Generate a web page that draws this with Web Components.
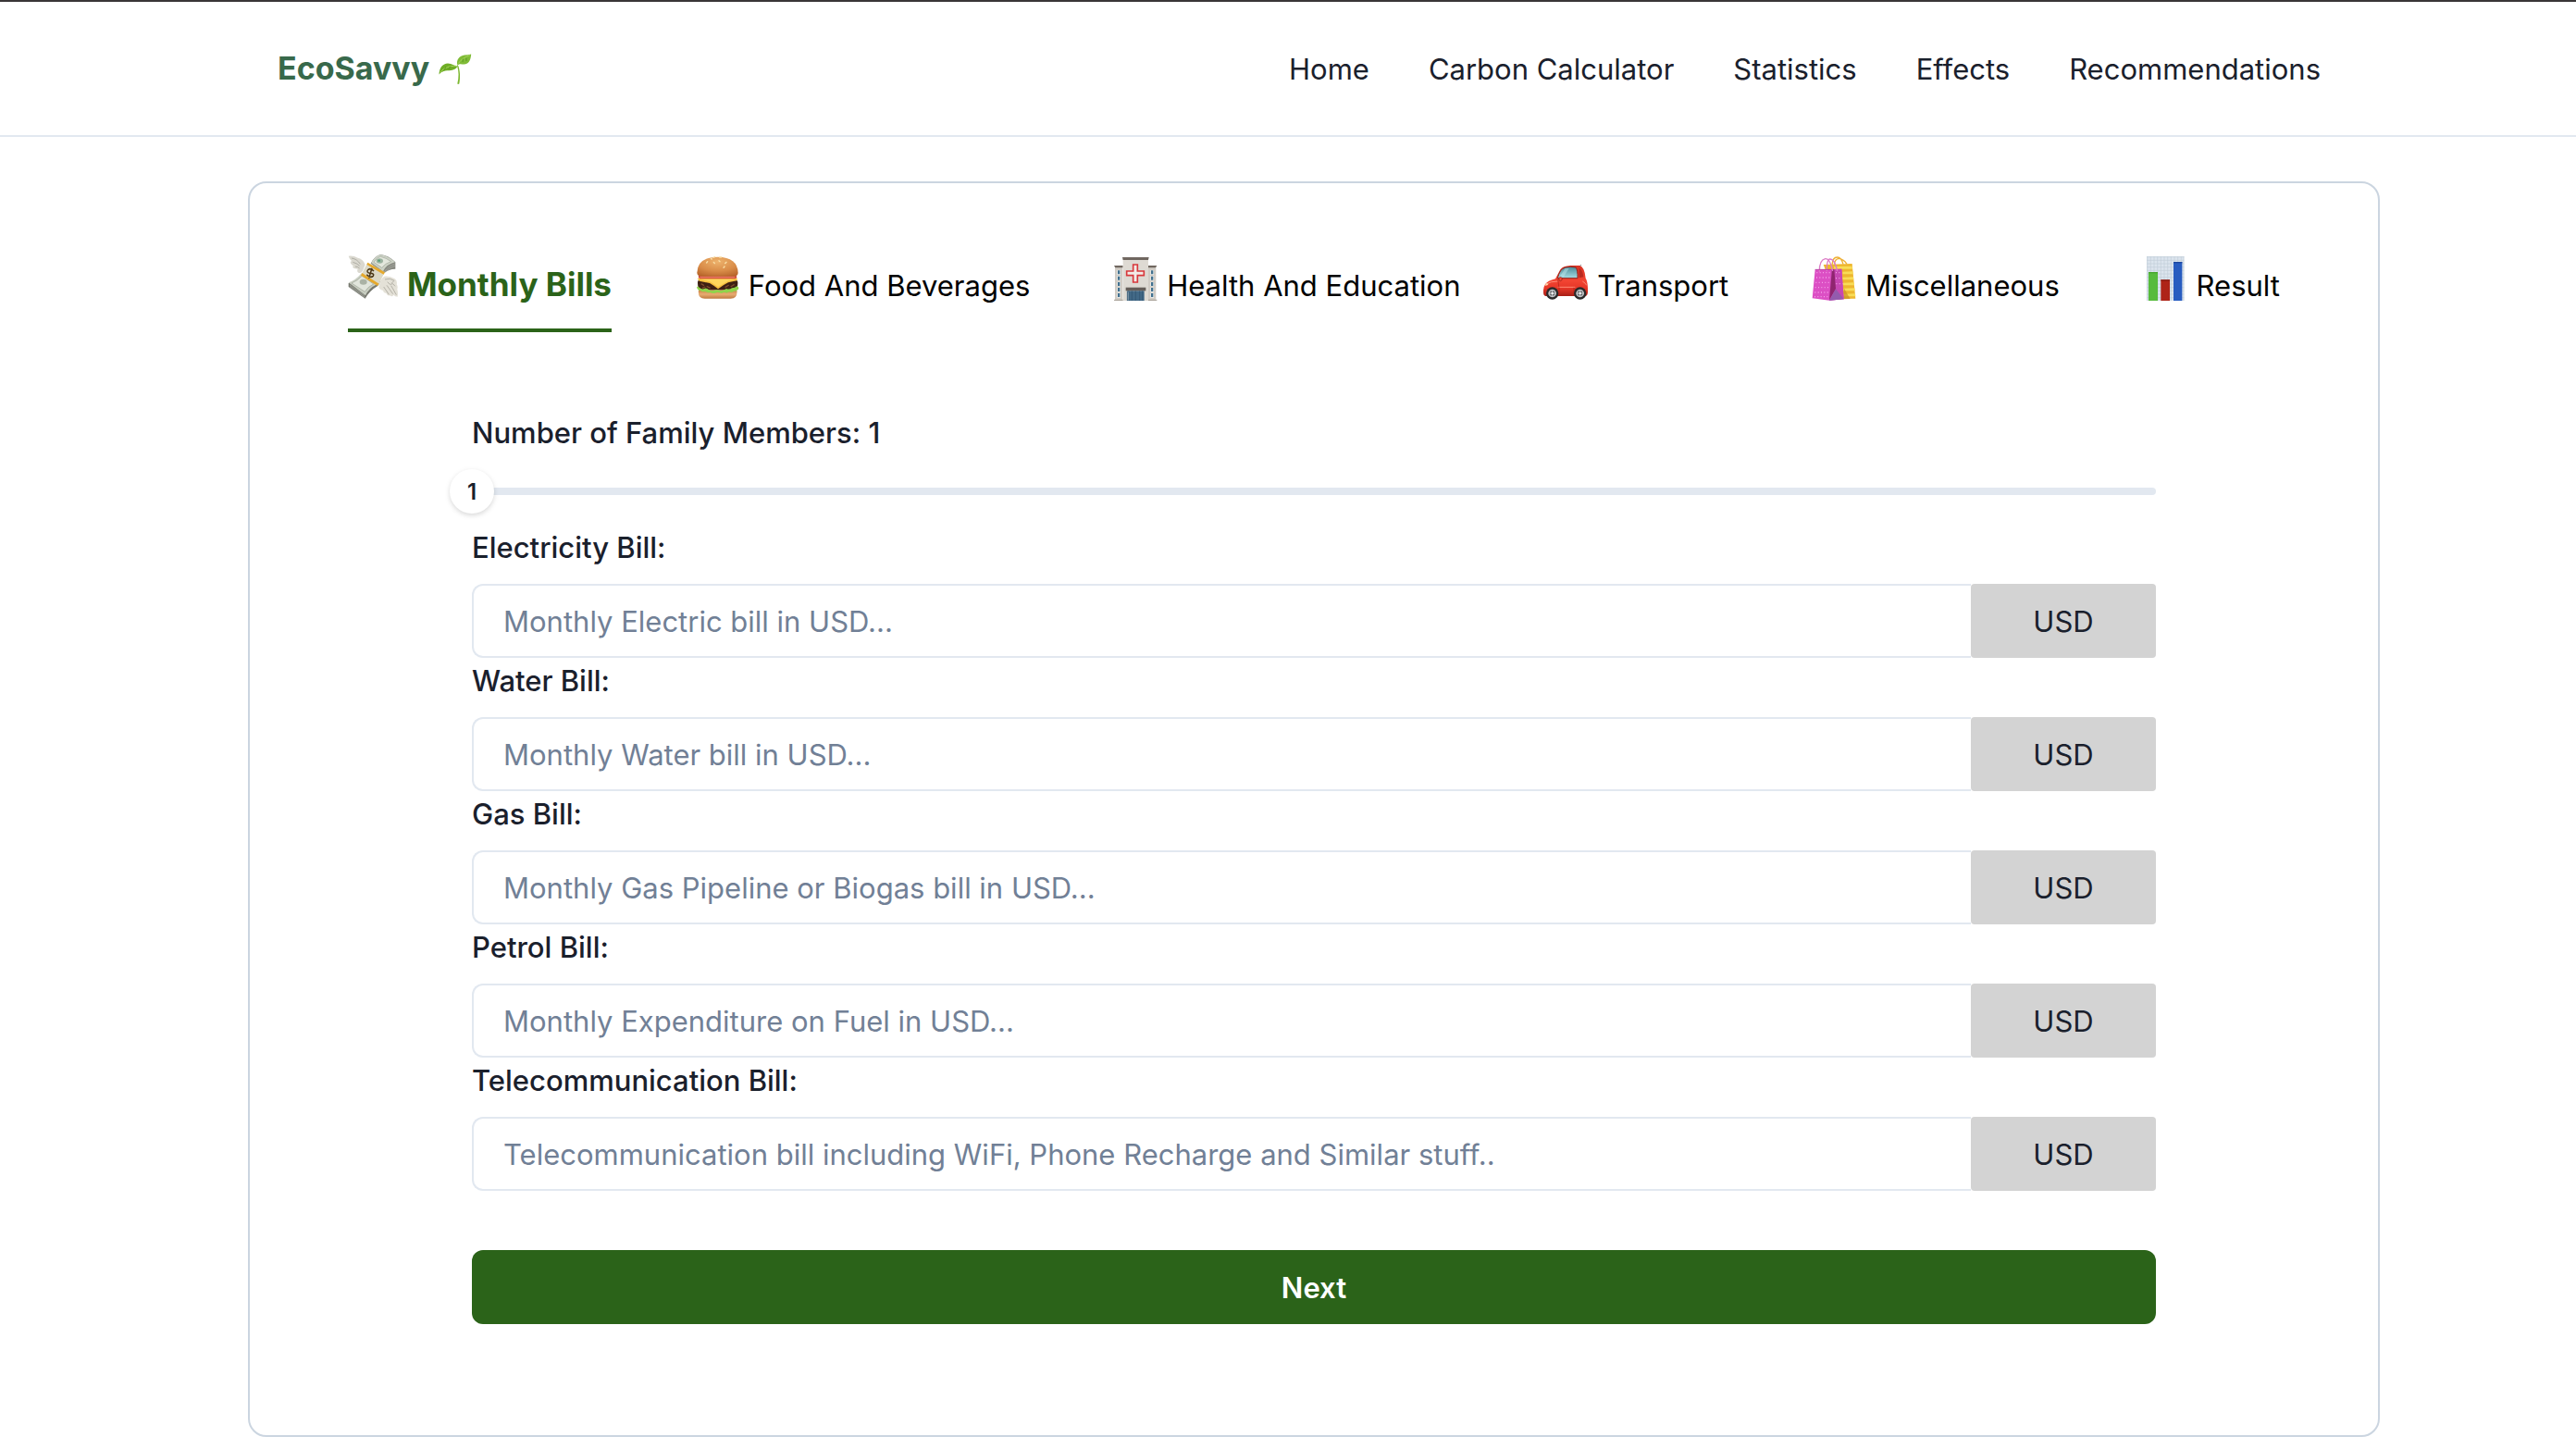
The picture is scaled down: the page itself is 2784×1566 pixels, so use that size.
<!DOCTYPE html>
<html lang="en">
<head>
<meta charset="utf-8">
<title>EcoSavvy – Carbon Calculator</title>
<style>
  html { background: #fff; }
  body {
    margin: 0;
    font-family: Inter, "Noto Sans", sans-serif;
    font-size: 31px;
    line-height: 48px;
    color: #1a202c;
    --line: #e2e8f0;
    --card-line: #cbd5e0;
    --green: #2b6319;
    --muted: #718096;
    --gutter-left: 268px;
    --gutter-right: 212px;
  }
</style>
</head>
<body>
<eco-header>
  <eco-nav-link href="#home">Home</eco-nav-link>
  <eco-nav-link href="#calculator">Carbon Calculator</eco-nav-link>
  <eco-nav-link href="#statistics">Statistics</eco-nav-link>
  <eco-nav-link href="#effects">Effects</eco-nav-link>
  <eco-nav-link href="#recommendations">Recommendations</eco-nav-link>
</eco-header>

<eco-card>
  <eco-tab slot="tabs" icon="money" active>Monthly Bills</eco-tab>
  <eco-tab slot="tabs" icon="burger">Food And Beverages</eco-tab>
  <eco-tab slot="tabs" icon="hospital">Health And Education</eco-tab>
  <eco-tab slot="tabs" icon="car">Transport</eco-tab>
  <eco-tab slot="tabs" icon="bags">Miscellaneous</eco-tab>
  <eco-tab slot="tabs" icon="chart">Result</eco-tab>

  <eco-slider label="Number of Family Members" value="1" min="1" max="20"></eco-slider>
  <eco-field label="Electricity Bill:" placeholder="Monthly Electric bill in USD..." unit="USD"></eco-field>
  <eco-field label="Water Bill:" placeholder="Monthly Water bill in USD..." unit="USD"></eco-field>
  <eco-field label="Gas Bill:" placeholder="Monthly Gas Pipeline or Biogas bill in USD..." unit="USD"></eco-field>
  <eco-field label="Petrol Bill:" placeholder="Monthly Expenditure on Fuel in USD..." unit="USD"></eco-field>
  <eco-field label="Telecommunication Bill:" placeholder="Telecommunication bill including WiFi, Phone Recharge and Similar stuff.." unit="USD"></eco-field>
  <eco-button>Next</eco-button>
</eco-card>

<script>
const icons = {
  seedling: `<svg viewBox="0 0 36 36" width="36" height="36" aria-hidden="true">
    <path d="M20 15C22 21 22 28 20.300 34.500Q21 35.300 22.300 34.600C23.600 28 23.400 20 20.800 14Z" fill="#7cb82f"/>
    <path d="M20.500 15.500C17.500 21.500 10 19.500 5.500 21Q2.500 21.800.5 24.500C.8 17.500 4.500 12.600 10 12.600C14.500 12.600 18 16 20.500 15.500Z" fill="#6fae26"/>
    <path d="M20.500 14.500C18.500 9 22.500 4 28 3.400Q32 3.200 35.200 2.400C35 6 34 10.500 31 12.500C27 15 23.500 11.500 20.500 14.500Z" fill="#7fbb36"/>
    <path d="M2 22C6 17 12 15 19 15.300M21.500 12.500C24.500 7.500 29 6 34 3.500" fill="none" stroke="#a6d65a" stroke-width="1"/>
    <path d="M6 20L8 16M11 18.500L13 15.500M26 11L26.500 7.500M30 10L30 6.500" stroke="#4f8d1a" stroke-width=".7"/>
  </svg>`,
  money: `<svg viewBox="48 33 162 162" width="54" height="54" aria-hidden="true">
    <path d="M104 78Q96 58 80 56Q66 48 50 50Q54 62 60 66Q54 68 57 74Q62 80 66 82Q60 86 68 90Q76 92 80 92Q76 100 82 104Q90 108 96 98Z" fill="#dad8cf"/>
    <path d="M60 57Q78 60 88 76M64 70Q78 74 86 82M72 84Q80 84 86 90" fill="none" stroke="#a5a39b" stroke-width="2.500"/>
    <path d="M50 138V150L104 188Q118 162 146 146L154 130Z" fill="#777970"/>
    <path d="M50 136Q72 130 92 106L142 142Q116 154 105 178Z" fill="#c9cfc2"/>
    <path d="M60 138Q80 130 94 114L131 141Q112 150 103 166Z" fill="#e1e5dc" stroke="#8c9287" stroke-width="1.500"/>
    <ellipse cx="98" cy="134" rx="12" ry="9" fill="#aab2a5"/>
    <path d="M54 144L102 178M54 149L103 184" stroke="#bfc2ba" stroke-width="1.500"/>
    <path d="M122 74Q134 50 154 45Q180 48 202 70V92Q180 92 164 106Z" fill="#85877f"/>
    <path d="M124 72Q136 50 154 46Q180 50 201 70Q174 76 162 100Z" fill="#ccd2c5"/>
    <path d="M132 70Q142 54 154 52Q172 56 188 68Q168 74 158 88Z" fill="#e3e7dd" stroke="#8e9489" stroke-width="1.500"/>
    <ellipse cx="151" cy="66" rx="11" ry="8" fill="#9bb3a0"/><circle cx="149" cy="65" r="3.500" fill="#4d9a75"/>
    <path d="M200 76Q178 82 166 102M201 82Q182 86 168 104" fill="none" stroke="#c0c2ba" stroke-width="1.500"/>
    <path d="M112 71L167 103L146 146L91 111Z" fill="#dcd9c6"/>
    <path d="M112 71L168 103L164 110L109 78ZM94 105L149 140L144 147L90 113Z" fill="#e6a92c"/>
    <path d="M132 99Q122 88 114 94Q106 102 119 106Q135 106 130 115Q120 123 109 110M126 89L116 122" fill="none" stroke="#4b3716" stroke-width="4.500"/>
    <path d="M148 152Q152 124 166 116Q184 114 200 124Q209 130 206 142Q211 148 208 158Q211 168 209 182Q200 182 196 176Q192 184 184 178Q176 180 172 170Q164 172 162 162Q154 162 148 152Z" fill="#e4e1d7"/>
    <path d="M168 126Q186 120 198 130L190 138M176 134L184 142L194 140L201 148M164 150L181 175M174 145L194 173M188 146L205 176" fill="none" stroke="#aaa79d" stroke-width="2.500"/>
  </svg>`,
  burger: `<svg viewBox="42 51 144 144" width="48" height="48" aria-hidden="true">
    <defs>
      <radialGradient id="bun" cx=".5" cy=".25" r=".8"><stop offset="0" stop-color="#edb26c"/><stop offset=".6" stop-color="#d98c48"/><stop offset="1" stop-color="#b9672c"/></radialGradient>
      <linearGradient id="heel" x1="0" y1="0" x2="0" y2="1"><stop offset="0" stop-color="#c98145"/><stop offset=".5" stop-color="#e8ad73"/><stop offset="1" stop-color="#c07a3f"/></linearGradient>
    </defs>
    <path d="M54 160H178Q182 188 158 188H74Q50 188 54 160Z" fill="url(#heel)"/>
    <path d="M51 134Q51 128 60 126H172Q181 128 181 136Q182 156 168 160H64Q50 158 51 134Z" fill="#3d2013"/>
    <path d="M62 140L72 146M80 148L92 154M140 152L152 144M158 150L170 142M66 154L76 150" stroke="#7d4a2c" stroke-width="4"/>
    <path d="M48 150Q54 148 58 154Q66 160 74 155Q82 154 88 160Q98 166 108 160Q118 158 126 163Q136 162 144 156Q154 160 162 154Q172 154 178 148Q186 150 183 158Q178 158 176 164Q168 162 162 168Q152 164 146 170Q136 166 128 171Q116 166 108 170Q98 172 92 168Q82 170 76 165Q66 168 60 162Q50 162 48 150Z" fill="#8fd44b"/>
    <path d="M50 122H180L178 130L150 136Q134 144 117 157Q104 146 90 138L56 131Z" fill="#f5bf3e"/>
    <path d="M53 124H178L150 131L117 150L90 133Z" fill="#ffd75c"/>
    <path d="M54 114H176Q180 119 174 124H58Q52 120 54 114Z" fill="#cf4634"/>
    <path d="M58 119H172" stroke="#ef8b75" stroke-width="3"/>
    <path d="M49 104Q50 54 116 53Q180 54 182 104Q182 116 166 116H66Q49 116 49 104Z" fill="url(#bun)"/>
    <path d="M102 55L107 53M122 54L128 54M80 72L83 68M103 70L106 74M120 65L123 68M144 70L140 74M138 84L135 88M94 59L97 60" stroke="#f9dfa7" stroke-width="4" stroke-linecap="round"/>
  </svg>`,
  hospital: `<svg viewBox="45 51 144 144" width="48" height="48" aria-hidden="true">
    <path d="M51 86H76V195H51ZM159 86H184V195H159Z" fill="#d1ccc5"/>
    <path d="M48 81H77V88H52ZM158 81H187L183 88H158Z" fill="#706760"/>
    <path d="M77 60H159V195H77Z" fill="#dedad3"/>
    <path d="M75 54H161L159 63H77Z" fill="#706760"/>
    <path d="M58 96H69V111H58ZM58 115H69V130H58ZM58 134H69V148H58ZM58 152H69V167H58ZM58 170H69V185H58ZM166 96H177V111H166ZM166 115H177V130H166ZM166 134H177V148H166ZM166 152H177V167H166ZM166 170H177V185H166Z" fill="#edf0ee"/>
    <path d="M60 97H67V109H60ZM60 116H67V128H60ZM60 135H67V147H60ZM60 153H67V165H60ZM60 171H67V183H60ZM168 97H175V109H168ZM168 116H175V128H168ZM168 135H175V147H168ZM168 153H175V165H168ZM168 171H175V183H168Z" fill="#41708f"/>
    <path d="M110 78H124V99H145V113H124V135H110V113H89V99H110Z" fill="#f2ece7" stroke="#d8383c" stroke-width="5"/>
    <path d="M86 152H151V163H86Z" fill="#655e59"/>
    <path d="M91 163H146V195H91Z" fill="#426987"/>
    <path d="M91 165H97V195H91ZM106 163V195M118 163V195M131 163V195M140 163V195" fill="#7e98aa" stroke="#2f526d" stroke-width="2"/>
    <path d="M48 193H77M159 193H187" stroke="#a59e94" stroke-width="3"/>
  </svg>`,
  car: `<svg viewBox="57 51 144 144" width="48" height="48" aria-hidden="true">
    <defs>
      <linearGradient id="paint" x1="0" y1="0" x2="0" y2="1"><stop offset="0" stop-color="#d93324"/><stop offset=".5" stop-color="#f24432"/><stop offset=".75" stop-color="#e53627"/><stop offset="1" stop-color="#a81f16"/></linearGradient>
      <linearGradient id="glass" x1="0" y1="0" x2="0" y2="1"><stop offset="0" stop-color="#4a8b99"/><stop offset="1" stop-color="#a5dbe3"/></linearGradient>
    </defs>
    <path d="M170 90L179 79" stroke="#555" stroke-width="3"/>
    <path d="M57 168Q56 152 63 142Q70 130 96 124L112 94Q120 82 145 81H174Q190 84 194 122Q202 134 201 168Q200 180 192 180H64Q57 178 57 168Z" fill="url(#paint)"/>
    <path d="M103 122Q110 92 128 87Q145 83 162 87Q169 95 168 122Z" fill="url(#glass)" stroke="#8d231c" stroke-width="3"/>
    <path d="M112 114L128 90H140L122 119Z" fill="#c3eaf0" opacity=".45"/>
    <path d="M172 89Q184 92 187 118L173 121Z" fill="#b92a20"/>
    <path d="M66 141Q80 132 104 132M104 151H160M184 132Q194 138 197 145" fill="none" stroke="#ff8b75" stroke-width="3"/>
    <path d="M104 126Q110 158 108 178H156V152" fill="none" stroke="#ac2017" stroke-width="2"/>
    <path d="M107 121Q113 116 118 122Q119 130 112 131Q106 130 107 121Z" fill="#f04a38" stroke="#8f1d15" stroke-width="2"/>
    <path d="M62 146Q72 146 74 140L66 139Z" fill="#ffe1b2"/>
    <circle cx="86" cy="171" r="20" fill="#2b2a2a"/><circle cx="176" cy="171" r="20" fill="#2b2a2a"/>
    <circle cx="86" cy="171" r="13" fill="#b9bcbf"/><circle cx="176" cy="171" r="13" fill="#b9bcbf"/>
    <circle cx="86" cy="171" r="8" fill="#5d5f62"/><circle cx="176" cy="171" r="8" fill="#5d5f62"/>
    <path d="M86 159V183M74 171H98M176 159V183M164 171H188" stroke="#d5d8da" stroke-width="2.500"/>
    <circle cx="86" cy="171" r="4" fill="#eee"/><circle cx="176" cy="171" r="4" fill="#eee"/>
  </svg>`,
  bags: `<svg viewBox="930 51 144 144" width="48" height="48" aria-hidden="true">
    <path d="M968 78L1061 75L1072 188L1010 189Z" fill="#eeb62f"/>
    <path d="M1002 84L1061 83L1062 92H1003ZM1030 101L1063 100L1064 109H1030ZM1030 119L1065 118L1066 127H1030ZM1030 137L1067 136L1068 145H1030ZM1030 155L1069 154L1070 163H1030ZM1030 173L1071 172L1072 181H1030Z" fill="#f8dc57"/>
    <path d="M1034 154L1055 189L1032 190Z" fill="#c99024" opacity=".7"/>
    <path d="M996 80Q997 54 1013 54Q1026 54 1032 77M1003 77Q1005 60 1018 58Q1034 60 1044 76" fill="none" stroke="#eeaf34" stroke-width="4"/>
    <path d="M941 94L1027 92L1034 190L987 194L932 187Z" fill="#dc4fc4"/>
    <path d="M993 94L1027 92L1034 190L987 194Z" fill="#c747b3"/>
    <path d="M996 94L1003 94L1008 156L987 193Z" fill="#8f256f"/>
    <path d="M1008 157L987 194L1034 190Z" fill="#935bad"/>
    <path d="M946 104H992M945 120H992M943 136H991M941 152H990M940 168H988M939 182H986M1008 104H1026M1008 122H1028M1009 140H1030" stroke="#f3a0e8" stroke-width="4" stroke-dasharray="3 7"/>
    <path d="M955 101Q954 63 974 59Q990 57 998 99M979 99Q978 63 988 60Q1004 58 1013 99" fill="none" stroke="#dc7cc6" stroke-width="4"/>
    <path d="M941 94H993" stroke="#a62d91" stroke-width="2"/>
  </svg>`,
  chart: `<svg viewBox="48 51 144 144" width="48" height="48" aria-hidden="true">
    <path d="M60 51H181V195H60Z" fill="#dce5ee"/>
    <path d="M60 53H181M60 64H181M60 75H181M60 86H181M60 97H181M60 108H181M60 119H181M60 130H181M60 141H181M60 152H181M60 163H181M60 174H181M60 185H181M62 51V195M73 51V195M84 51V195M95 51V195M106 51V195M117 51V195M128 51V195M139 51V195M150 51V195M161 51V195M172 51V195M180 51V195" stroke="#c3ced9" stroke-width="2"/>
    <path d="M66 102H96V195H66Z" fill="#57bb3d"/><path d="M66 102H96V106H66Z" fill="#47a52f"/>
    <path d="M106 127H135V195H106Z" fill="#ae2418"/><path d="M106 127H135V131H106Z" fill="#871910"/>
    <path d="M147 69H175V195H147Z" fill="#285cc0"/><path d="M147 69H175V73H147Z" fill="#1c479e"/>
  </svg>`
};

class EcoElement extends HTMLElement {
  connectedCallback() {
    if (this.shadowRoot) return;
    this.attachShadow({ mode: 'open' }).innerHTML = this.render();
    this.ready();
  }
  attr(name) { return this.getAttribute(name) ?? ''; }
  ready() {}
}

customElements.define('eco-header', class extends EcoElement {
  render() {
    return `<style>
      :host { display: block; border-top: 2px solid #3a3637; border-bottom: 2px solid var(--line); }
      header { display: flex; align-items: center; justify-content: space-between;
        padding: 47px calc(var(--gutter-right) + 64px) 47px calc(var(--gutter-left) + 32px); }
      .logo { display: flex; align-items: center; gap: 10px; color: #38694b; font-size: 34px; font-weight: 700; text-decoration: none; }
      nav { display: flex; gap: 64px; padding-top: 2px; }
    </style>
    <header><a class="logo" href="#home">EcoSavvy ${icons.seedling}</a><nav><slot></slot></nav></header>`;
  }
});

customElements.define('eco-nav-link', class extends EcoElement {
  render() {
    return `<style>
      :host { display: block; }
      a { color: inherit; text-decoration: none; white-space: nowrap; }
    </style><a href="${this.attr('href')}"><slot></slot></a>`;
  }
});

customElements.define('eco-card', class extends EcoElement {
  render() {
    return `<style>
      :host { display: block; margin: 48px var(--gutter-right) 12px var(--gutter-left); border: 2px solid var(--card-line); border-radius: 20px; }
      .tabs { display: flex; align-items: flex-end; justify-content: space-between; padding: 73px 106px 0; }
      .panel { padding: 84px 240px 120px; }
    </style>
    <div class="tabs" role="tablist"><slot name="tabs"></slot></div>
    <div class="panel"><slot></slot></div>`;
  }
});

customElements.define('eco-tab', class extends EcoElement {
  render() {
    const active = this.hasAttribute('active');
    return `<style>
      :host { display: block; }
      button { display: flex; align-items: flex-end; gap: 10px; margin: 0; padding: 0 0 24px; border: 0;
        border-bottom: 4px solid transparent; background: none; color: #000; font: inherit; line-height: 44px; white-space: nowrap; cursor: pointer; }
      svg { flex: none; margin-bottom: 6px; }
      :host([active]) button { border-color: var(--green); color: var(--green); font-size: 35px; line-height: 48px; font-weight: 700; }
    </style>
    <button type="button" role="tab" aria-selected="${active}">${icons[this.attr('icon')]}<span><slot></slot></span></button>`;
  }
});

customElements.define('eco-slider', class extends EcoElement {
  render() {
    const v = this.attr('value');
    return `<style>
      :host { display: block; margin-bottom: 12px; }
      label { display: block; margin-bottom: 14px; line-height: 50px; font-weight: 500; }
      .rail { position: relative; height: 48px; display: flex; align-items: center; }
      .rail::before { content: ""; flex: 1; height: 8px; border-radius: 4px; background: var(--line); }
      input { position: absolute; inset: 0 -24px; width: calc(100% + 48px); height: 48px; margin: 0; appearance: none; background: none; cursor: pointer; }
      input::-webkit-slider-runnable-track { height: 48px; background: none; }
      input::-webkit-slider-thumb { appearance: none; width: 48px; height: 48px; border: 0; border-radius: 50%; background: #fff;
        box-shadow: 0 2px 6px rgba(0,0,0,.1), 0 2px 4px rgba(0,0,0,.06); }
      output { position: absolute; top: 0; left: calc(var(--at, 0) * 100%); width: 48px; margin-left: -24px; text-align: center;
        font-size: 24px; line-height: 50px; font-weight: 600; pointer-events: none; }
    </style>
    <label for="range">${this.attr('label')}: ${v}</label>
    <div class="rail">
      <input id="range" type="range" min="${this.attr('min')}" max="${this.attr('max')}" value="${v}">
      <output for="range">${v}</output>
    </div>`;
  }
  ready() {
    const $ = s => this.shadowRoot.querySelector(s);
    const input = $('input');
    input.addEventListener('input', () => {
      $('output').textContent = input.value;
      $('label').textContent = `${this.attr('label')}: ${input.value}`;
      $('output').style.setProperty('--at', (input.value - input.min) / (input.max - input.min));
    });
  }
});

customElements.define('eco-field', class extends EcoElement {
  render() {
    return `<style>
      :host { display: block; }
      label { display: block; margin-bottom: 14px; line-height: 50px; font-weight: 500; }
      .group { display: flex; height: 80px; }
      input { flex: 1; min-width: 0; box-sizing: border-box; margin: 0; padding: 2px 32px 0; border: 2px solid var(--line); border-right: 0;
        border-radius: 12px 0 0 12px; background: #fff; color: inherit; font: inherit; outline: none; }
      input::placeholder { color: var(--muted); opacity: 1; }
      .unit { display: flex; align-items: center; justify-content: center; box-sizing: border-box; width: 200px; padding-top: 2px; border-radius: 4px; background: #d3d3d3; }
    </style>
    <label for="amount">${this.attr('label')}</label>
    <div class="group"><input id="amount" type="text" inputmode="decimal" placeholder="${this.attr('placeholder')}"><span class="unit">${this.attr('unit')}</span></div>`;
  }
});

customElements.define('eco-button', class extends EcoElement {
  render() {
    return `<style>
      :host { display: block; margin-top: 64px; }
      button { display: block; width: 100%; height: 80px; padding: 2px 0 0; border: 0; border-radius: 12px; background: var(--green);
        color: #fff; font: inherit; font-weight: 600; cursor: pointer; }
    </style><button type="button"><slot></slot></button>`;
  }
});
</script>
</body>
</html>
